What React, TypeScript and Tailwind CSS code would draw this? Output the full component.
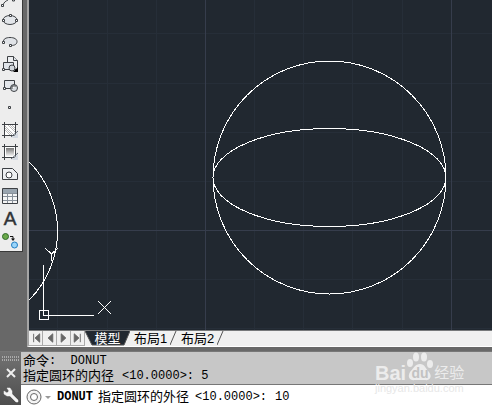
import type { ReactNode } from "react";

const ink = "#3d4044";

const tools: { name: string; art: ReactNode }[] = [
  {
    name: "Ellipse",
    art: (
      <>
        <ellipse cx="10" cy="11" rx="7" ry="4.500" fill="#e3e6ea" stroke={ink} />
        <path d="M2.500 10.500h2v2h-2zM15.500 10.500h2v2h-2zM9.500 5.500h2v2h-2z" fill="#fff" stroke={ink} />
      </>
    ),
  },
  {
    name: "Ellipse Arc",
    art: (
      <>
        <path d="M3.500 11C3 8 6 6.500 10 6.500s7 1.500 7 4-2 4-6 4z" fill="#e0e3e7" />
        <path d="M3.500 11C3 8 6 6.500 10 6.500s7 1.500 7 4-2 4-6 4" fill="none" stroke={ink} />
        <path d="M2.500 10.500h2v2h-2zM9.500 13.500h2v2h-2z" fill="#fff" stroke={ink} />
      </>
    ),
  },
  {
    name: "Insert Block",
    art: (
      <>
        <path d="M7.500 3.500h6l4 4v9h-10z" fill="#eceef0" stroke={ink} />
        <path d="M13.500 3.500v4h4M3.500 9.500h10v7h-10z" fill="#dfe3e8" stroke={ink} />
        <circle cx="12" cy="15" r="3" fill="#d2d7dc" stroke={ink} />
        <path d="M2.500 15.500h2v2h-2z" fill="#fff" stroke={ink} />
        <path d="M18 14v5h-5z" fill="#000" />
      </>
    ),
  },
  {
    name: "Make Block",
    art: (
      <>
        <path d="M4.500 5.500h10v8h-10z" fill="#e3e6ea" stroke={ink} />
        <circle cx="14" cy="13" r="3.500" fill="#d8dde2" stroke={ink} />
        <path d="M12 14v-3h4M3.500 12.500h2v2h-2z" fill="#fff" stroke={ink} />
      </>
    ),
  },
  { name: "Point", art: <path d="M8.500 9.500h2v2h-2z" fill="#eee" stroke={ink} /> },
  {
    name: "Hatch",
    art: (
      <>
        <path d="M5 6h10v10H5z" fill="#fff" />
        <path d="M5 7l9 9M5 11l5 5M8 6l7 7M12 6l3 3M5 9l7 7M10 6l5 5" stroke="#999" strokeWidth="0.700" />
        <path d="M4.500 3v16M15.500 3v16M2 5.500h16M2 16.500h16" stroke={ink} />
        <path d="M12 19l6-6v6z" fill="#d4dae2" />
        <path d="M11 18l7-6" stroke="#59636e" />
      </>
    ),
  },
  {
    name: "Gradient",
    art: (
      <>
        <defs>
          <linearGradient id="shade" x1="0" y1="0" x2="0" y2="1">
            <stop stopColor="#777" />
            <stop offset="1" stopColor="#f4f4f4" />
          </linearGradient>
        </defs>
        <path d="M4 5h12v12H4z" fill="#fff" />
        <path d="M6 7h8v8H6z" fill="url(#shade)" />
        <path d="M4.500 3v16M15.500 3v16M2 5.500h16M2 16.500h16" stroke={ink} />
        <path d="M12 19l6-6v6z" fill="#d4dae2" />
        <path d="M11 18l7-6" stroke="#59636e" />
      </>
    ),
  },
  {
    name: "Region",
    art: (
      <>
        <path d="M2.500 5.500h10l5 5v6h-15z" fill="#eef0f2" stroke={ink} />
        <circle cx="9" cy="12" r="3" fill="#fff" stroke={ink} />
      </>
    ),
  },
  {
    name: "Table",
    art: (
      <>
        <path d="M2.500 3.500h15v15h-15z" fill="#f6f6f6" stroke={ink} />
        <path d="M3 4h14v4H3z" fill="#9aa5af" />
        <path d="M3 8.500h14M3 11.500h14M3 15.500h14M7.500 8v10M12.500 8v10" stroke="#89919a" />
      </>
    ),
  },
  {
    name: "Multiline Text",
    art: (
      <text x="10" y="18" textAnchor="middle" fontFamily="Liberation Sans, sans-serif" fontSize="19" fill="#303336" stroke="#303336" strokeWidth="0.500">A</text>
    ),
  },
  {
    name: "Add Selected",
    art: (
      <>
        <circle cx="5.500" cy="7.500" r="3" fill="#6aa84a" stroke="#2d6926" />
        <path d="M10 7.500h3v3" fill="none" stroke="#111" />
        <path d="M11 9.500h4l-2 2.500z" fill="#111" />
        <circle cx="14.500" cy="16" r="3" fill="#9bd5fa" stroke="#237fc2" />
      </>
    ),
  },
];

function Toolbar() {
  return (
    <nav aria-label="Draw" className="flex w-[23px] shrink-0 flex-col self-start border-r border-b border-[#393939] bg-[#ededed]">
      <button aria-label="Arc" className="block h-[9px]">
        <svg width="20" height="9" viewBox="0 0 20 9">
          <path d="M3 5C4 2 6 1 8 0M12.500 0v1h2V0" fill="none" stroke={ink} />
          <path d="M1.500 4.500h2v2h-2z" fill="#fff" stroke={ink} />
        </svg>
      </button>
      {tools.map((t) => (
        <button key={t.name} aria-label={t.name} className="block h-[22px]">
          <svg width="20" height="22" viewBox="0 0 20 22">{t.art}</svg>
        </button>
      ))}
    </nav>
  );
}

const minorX = [28, 78, 127, 225, 274, 323, 373];
const minorY = [33, 83, 132, 181, 279, 328];

function Drawing() {
  return (
    <div className="relative min-h-[330px] flex-1 overflow-hidden bg-[#212830]">
      <svg className="absolute top-0 left-0 h-full w-full" shapeRendering="crispEdges" fill="none" role="img" aria-label="Drawing area">
        <g stroke="#262e38">
          {minorX.map((x) => <line key={x} x1={x + 0.5} x2={x + 0.5} y1="0" y2="100%" />)}
          {minorY.map((y) => <line key={y} x1="0" x2="100%" y1={y + 0.5} y2={y + 0.5} />)}
        </g>
        <g stroke="#363d4c">
          <line x1="176.500" x2="176.500" y1="0" y2="100%" />
          <line x1="422.500" x2="422.500" y1="0" y2="100%" />
          <line x1="0" x2="100%" y1="230.500" y2="230.500" />
        </g>
        <g stroke="#fff">
          <circle cx="300.500" cy="177.500" r="116.500" />
          <ellipse cx="300.500" cy="177.500" rx="116.500" ry="49" />
          <circle cx="-70" cy="231" r="98.500" />
          <path d="M10.500 310.500h9v9h-9zM14.500 265v50.500H65" />
          <path d="M69 301l13 13M82 301l-13 13M16 248l6.500 6 6.500-6M22.500 254v7" />
        </g>
      </svg>
    </div>
  );
}

const steps = [
  { name: "First layout", d: "M4.500 3v9M11 3v9L6 7.500z" },
  { name: "Previous layout", d: "M10 3v9L5 7.500z" },
  { name: "Next layout", d: "M4 3v9l5-4.500z" },
  { name: "Last layout", d: "M3 3v9l5-4.500zM9.500 3v9" },
];

function LayoutTabs() {
  return (
    <div className="flex h-4 border-t border-[#77797b] bg-[#f0f0f0] font-['Liberation_Sans','Noto_Sans_CJK_SC',sans-serif] text-[13px] leading-[15px] text-black">
      {steps.map((s) => (
        <button key={s.name} aria-label={s.name} className="w-[14px] border-r border-b border-[#aaa]">
          <svg width="13" height="14" viewBox="0 0 13 15"><path d={s.d} fill="#666" stroke="#666" /></svg>
        </button>
      ))}
      <button className="relative w-[45px] text-center text-white">
        <svg className="absolute top-0 left-0" width="45" height="15" viewBox="0 0 45 15" aria-hidden="true">
          <path d="M0 0h45l-6 14H7z" fill="#212830" />
          <path d="M0 0l7 14h32L45 0" fill="none" stroke="#555" />
        </svg>
        <span className="relative">模型</span>
      </button>
      {["布局1", "布局2"].map((label) => (
        <button key={label} className="flex w-[47px] justify-between pl-1">
          {label}
          <svg width="7" height="15" viewBox="0 0 7 15" aria-hidden="true"><path d="M0 14L6 0" stroke="#555" /></svg>
        </button>
      ))}
    </div>
  );
}

function Watermark() {
  return (
    <div className="pointer-events-none absolute top-[351px] left-[375px] font-['Liberation_Sans','Noto_Sans_CJK_SC',sans-serif] text-[#ececec]">
      <div className="flex h-[30px] items-end leading-4">
        <span className="text-[20px] font-bold">Bai</span>
        <svg width="28" height="29" viewBox="0 0 28 29" aria-hidden="true">
          <g fill="#ececec">
            <ellipse cx="4" cy="11" rx="3" ry="4" />
            <ellipse cx="10" cy="5" rx="3" ry="4.500" />
            <ellipse cx="18" cy="5" rx="3" ry="4.500" />
            <ellipse cx="24" cy="12" rx="3" ry="4" />
            <path d="M14 12c5 0 5 4 9 8 4 5 0 9-4 8H9c-5 1-8-3-5-8 4-4 5-8 10-8z" />
          </g>
          <text x="14" y="26" textAnchor="middle" fontSize="14" fontWeight="bold" fill="#c2c2c2">du</text>
        </svg>
        <span className="text-[15px]">经验</span>
      </div>
      <div className="text-[11px] leading-[14px] text-[#e7e7e7]">jingyan.baidu.com</div>
    </div>
  );
}

const mono = "font-['Liberation_Mono','Noto_Sans_CJK_SC',monospace] text-[12px]";

function CommandLine() {
  return (
    <section aria-label="Command line" className="flex h-[54px] shrink-0 border-t border-[#777] text-black">
      <div className="flex w-[21px] shrink-0 flex-col items-center bg-linear-to-b from-[#737373] to-[#4e4e4e]">
        <svg className="mt-1" width="19" height="6" viewBox="0 0 19 6" aria-hidden="true">
          <path d="M1 1h18M1 4h18" stroke="#aaa" strokeWidth="2" strokeDasharray="1 1" />
        </svg>
        <button aria-label="Close" className="mt-[5px] block">
          <svg width="12" height="12" viewBox="0 0 12 12"><path d="M2 2l8 8M10 2l-8 8" stroke="#eee" strokeWidth="2" /></svg>
        </button>
        <button aria-label="Customize" className="mt-2 block">
          <svg width="16" height="16" viewBox="0 0 16 16">
            <path d="M4 1h3l2 3v3l6 6v2h-2L7 9H4L1 7V4l3 2 2-2z" fill="#f3f3f3" stroke="#f3f3f3" strokeWidth="0.500" />
          </svg>
        </button>
      </div>
      <div className={`${mono} flex min-w-0 flex-1 flex-col`}>
        <div className="h-[34px] border-b border-[#777] bg-[#c7c7c7] pt-[2px] pl-[2px] leading-[15px] whitespace-pre">
          <div className="flex"><span className="text-[13px]">命令</span><span>:  DONUT</span></div>
          <div className="flex"><span className="text-[13px]">指定圆环的内径</span><span className="pl-2">&lt;10.0000&gt;: 5</span></div>
        </div>
        <div className="flex flex-1 items-center bg-white pt-1 pl-1 leading-[15px] whitespace-pre">
          <button aria-label="Recent commands" className="w-8 shrink-0">
            <svg width="26" height="16" viewBox="0 0 26 16">
              <circle cx="9" cy="8" r="7" fill="#f4f4f4" stroke="#666" />
              <circle cx="9" cy="8" r="3.500" fill="#fff" stroke="#666" />
              <path d="M20 7h6l-3 3z" fill="#999" />
            </svg>
          </button>
          <label htmlFor="command" className="flex shrink-0">
            <span className="font-bold">DONUT</span>
            <span className="pl-[5px] text-[13px]">指定圆环的外径</span>
            <span className="pl-[6px]">&lt;10.0000&gt;:</span>
          </label>
          <input id="command" defaultValue="10" className="ml-2 min-w-0 flex-1 bg-transparent outline-none" />
        </div>
      </div>
    </section>
  );
}

export default function App() {
  return (
    <div className="relative flex min-h-screen flex-col overflow-hidden bg-[#686868]">
      <div className="flex flex-1">
        <Toolbar />
        <main className="mb-1 ml-1 flex min-w-0 flex-1 flex-col border-b border-l-2 border-b-white border-l-[#a5a5a5]">
          <Drawing />
          <LayoutTabs />
        </main>
      </div>
      <CommandLine />
      <Watermark />
    </div>
  );
}
